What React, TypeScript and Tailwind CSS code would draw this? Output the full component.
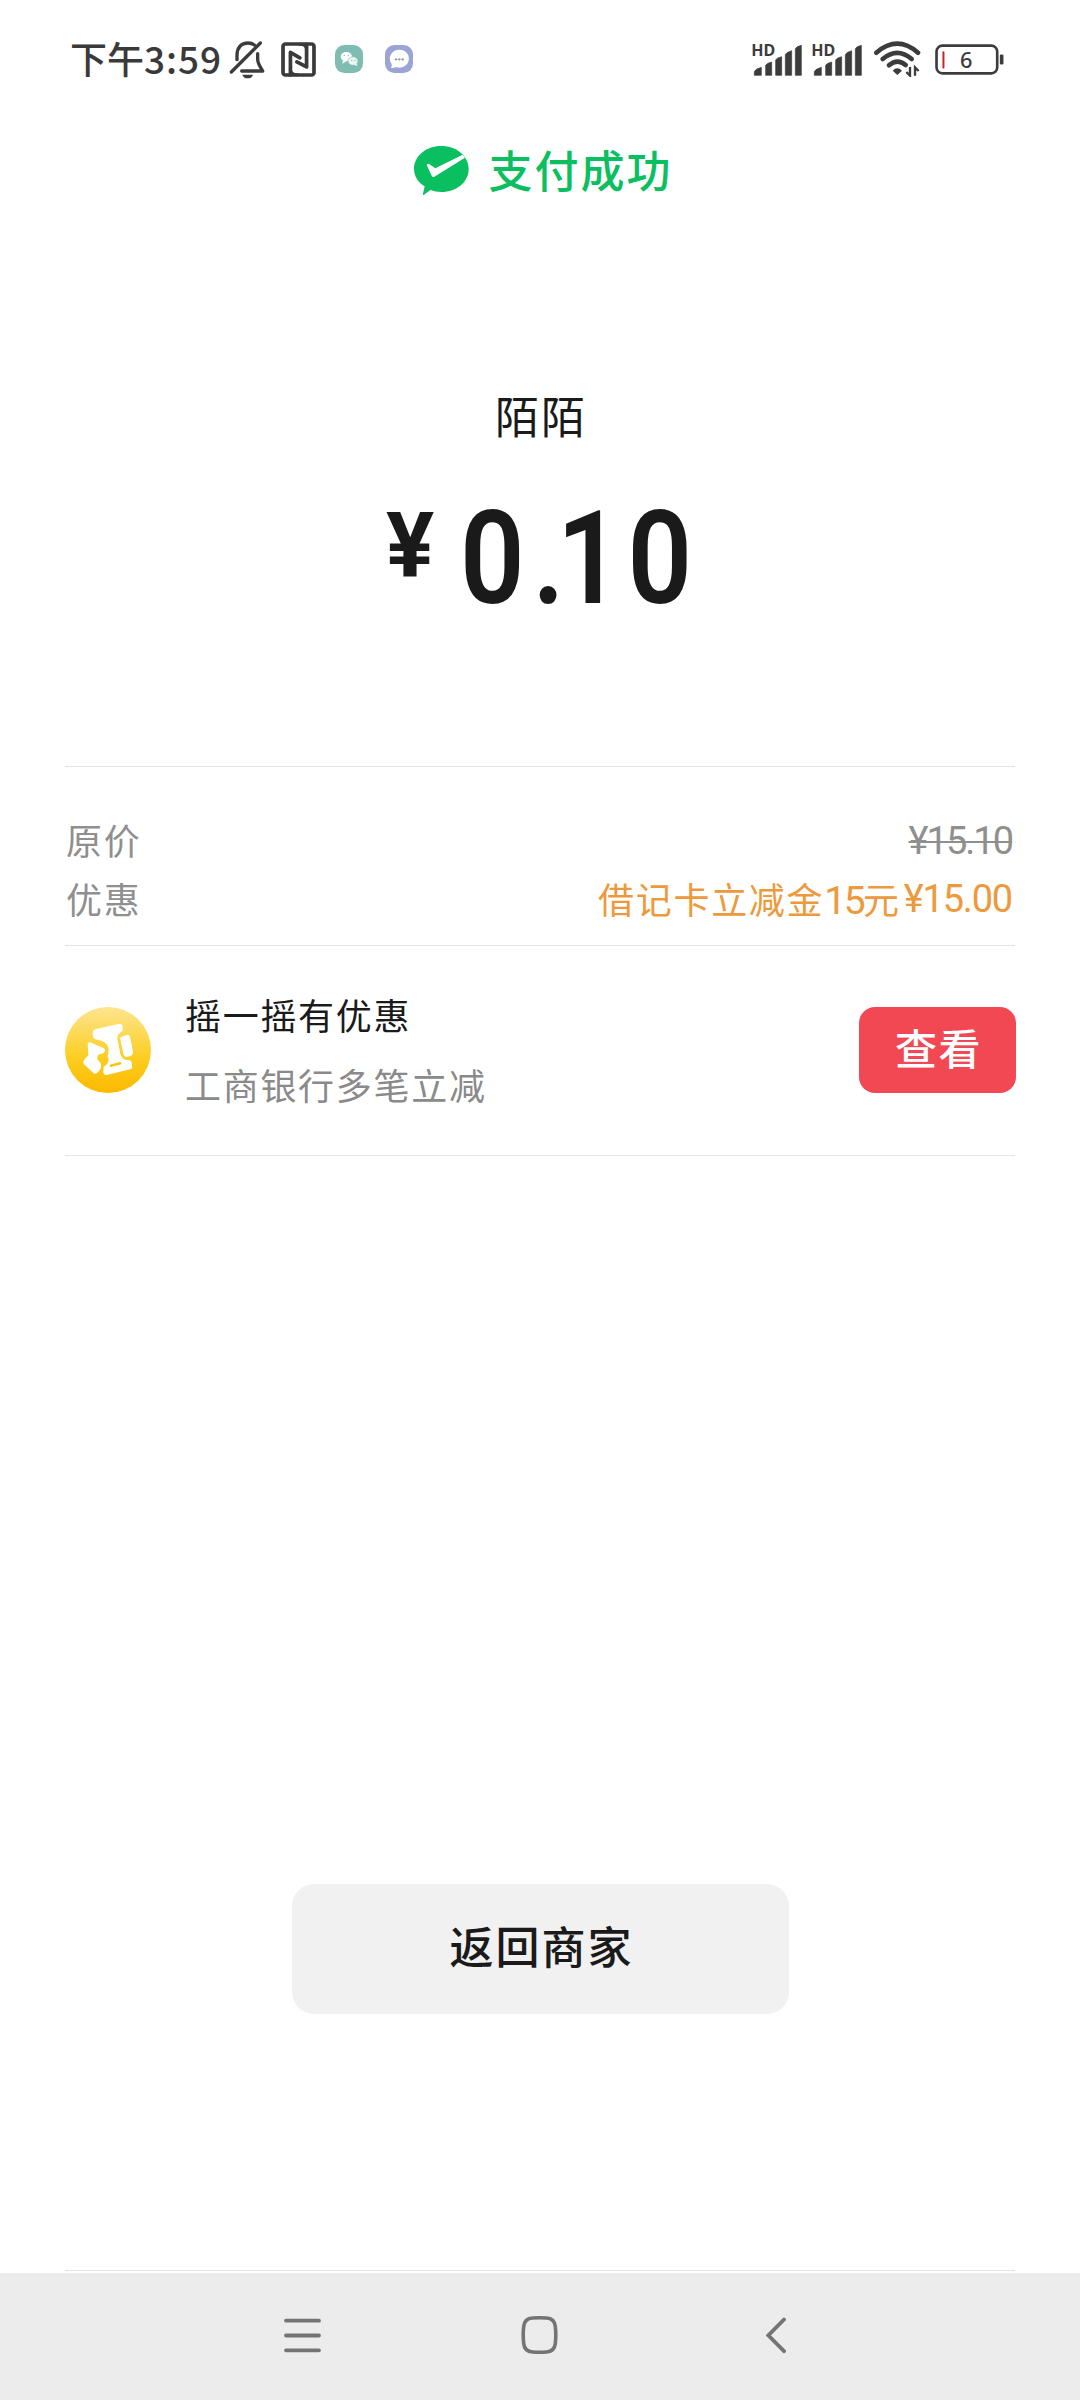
import { clsx } from 'clsx';
import type { ReactNode } from 'react';

const CJK = "font-[Roboto,'Noto_Sans_CJK_SC',sans-serif]";

const SIGNAL_BARS = [
  'M70 163 V152 Q72 145 91 139 V163 Z',
  'M104 163 V133 Q106 127 122 123 V163 Z',
  'M134 163 V117 Q136 111 152 107 V163 Z',
  'M163 163 V101 Q165 94 182 89 V163 Z',
  'M193 163 V84 Q195 77 211 73 V163 Z',
];

const MutedBellIcon = () => (
  <svg viewBox="537 60 108 117" className="h-[39px] w-9" fill="none">
    <g stroke="#3c3c3c" strokeWidth="10" strokeLinecap="round">
      <path d="M561 119 V106 C561 82 574 69 594 69 C602 69 608 71 613 75" />
      <path d="M544 156 L631 69" />
      <path d="M623 101 V118 C623 132 632 142 638 153 H575" strokeLinejoin="round" />
    </g>
    <path d="M577 164 H609 Q606 175 593 175 Q580 175 577 164 Z" fill="#3c3c3c" />
  </svg>
);

const NfcIcon = () => (
  <svg viewBox="692 65 104 104" className="size-[35px]" fill="none">
    <rect x="698" y="71" width="92" height="92" rx="7" stroke="#3a3a3a" strokeWidth="11" />
    <g stroke="#3a3a3a" strokeWidth="11" strokeLinejoin="round" strokeLinecap="round">
      <path d="M720 162 V96 L748 112" />
      <path d="M768 72 V139 L739 124" />
      <path d="M748 72 Q768 72 768 88 M741 162 Q720 162 720 146" strokeWidth="9" />
    </g>
  </svg>
);

const WeChatBadge = () => (
  <svg viewBox="855 75 84 84" className="size-7">
    <rect x="855" y="75" width="84" height="84" rx="28" fill="#7fbcb1" />
    <ellipse cx="889" cy="110" rx="17" ry="14" fill="#fff" />
    <path d="M879 120 L877 131 L889 124 Z" fill="#fff" />
    <ellipse cx="909" cy="123" rx="15" ry="13" fill="#eaf6f3" stroke="#7fbcb1" strokeWidth="2" />
    <path d="M912 134 L922 139 L920 130 Z" fill="#eaf6f3" />
    <g fill="#7fbcb1">
      <circle cx="883" cy="106" r="2" />
      <circle cx="895" cy="106" r="2" />
      <circle cx="905" cy="121" r="2" />
      <circle cx="915" cy="121" r="2" />
    </g>
  </svg>
);

const MessageBadge = () => (
  <svg viewBox="1005 75 84 84" className="size-7">
    <rect x="1005" y="75" width="84" height="84" rx="28" fill="#9ba5d5" />
    <path
      d="M1048 89 A28 27 0 1 1 1038 141 Q1031 145 1023 144 Q1027 138 1025 132 A28 27 0 0 1 1048 89 Z"
      fill="#fff"
    />
    <g fill="#8f9a8e">
      <circle cx="1038" cy="118" r="3.5" />
      <circle cx="1048" cy="118" r="3.5" />
      <circle cx="1058" cy="118" r="3.5" />
    </g>
  </svg>
);

const SignalIcon = ({ className }: { className?: string }) => (
  <svg
    viewBox="63 42 150 123"
    className={clsx('-mt-2 h-[41px] w-[50px] overflow-visible', className)}
    fill="#3c3c3c"
  >
    <text
      x="61"
      y="105"
      fontSize="47"
      fontWeight="700"
      fontFamily="'Noto Sans', sans-serif"
      textLength="72"
      lengthAdjust="spacingAndGlyphs"
    >
      HD
    </text>
    {SIGNAL_BARS.map((d) => (
      <path key={d} d={d} strokeWidth="2" stroke="#3c3c3c" strokeLinejoin="round" />
    ))}
  </svg>
);

const WifiIcon = () => (
  <svg viewBox="431 66 141 108" className="h-9 w-[47px]" fill="none">
    <g stroke="#3c3c3c" strokeWidth="14" strokeLinecap="round">
      <path d="M438 101 Q501 47 563 101" />
      <path d="M457 120 Q501 83 544 120" />
      <path d="M476 139 Q501 117 526 138" />
    </g>
    <path d="M487 155 Q500 141 515 155 L501 168 Z" fill="#3c3c3c" />
    <path
      d="M539 144 V170 L528 159 M554 170 V145 L565 156"
      stroke="#3c3c3c"
      strokeWidth="7"
    />
  </svg>
);

const BatteryIcon = () => (
  <svg viewBox="614 70 208 94" className="h-[31px] w-[69px]" fill="none">
    <rect x="618" y="75" width="184" height="84" rx="18" stroke="#3c3c3c" strokeWidth="8" />
    <rect x="636" y="92" width="6" height="52" rx="3" fill="#cf2027" />
    <rect x="810" y="102" width="11" height="30" rx="4" fill="#3c3c3c" />
    <text
      x="708"
      y="142"
      fontSize="66"
      fontWeight="500"
      textAnchor="middle"
      fontFamily="'Noto Sans', sans-serif"
      fill="#3c3c3c"
    >
      6
    </text>
  </svg>
);

const StatusBar = () => (
  <div className="flex h-[118px] items-center justify-between pr-[76px] pl-[70px]">
    <div className="flex items-center">
      <span className="flex w-[159px] items-baseline pt-0.5 font-medium whitespace-nowrap text-[#3a3a3a]">
        <span className="w-[74px] text-[37px] leading-[50px]">下午</span>
        <span className="font-['Noto_Sans_CJK_SC',sans-serif] text-[37px] leading-[50px] tracking-[0.9px]">
          3:59
        </span>
      </span>
      <MutedBellIcon />
      <span className="ml-4 flex items-center">
        <NfcIcon />
        <span className="ml-[19px] flex gap-[22px]">
          <WeChatBadge />
          <MessageBadge />
        </span>
      </span>
    </div>
    <div className="flex items-center">
      <SignalIcon />
      <SignalIcon className="ml-2.5" />
      <span className="ml-3">
        <WifiIcon />
      </span>
      <span className="ml-[14px]">
        <BatteryIcon />
      </span>
    </div>
  </div>
);

const PaidBubbleIcon = () => (
  <svg viewBox="69 78 165 147" className="h-[49px] w-[55px]">
    <path
      d="M151 78 C197 78 233 108 233 147 C233 186 197 216 151 216 C139 216 128 214 118 210 L98 225 Q95 226 96 221 L101 199 C81 187 69 168 69 147 C69 108 105 78 151 78 Z"
      fill="#0abf5f"
    />
    <path
      d="M107 135 Q109 129 114 132 L133 145 L215 104 L222 113 L130 170 Q125 173 122 167 Z"
      fill="#fff"
    />
  </svg>
);

const CoinIcon = () => (
  <svg viewBox="75 141 258 258" className="size-[86px] shrink-0">
    <defs>
      <linearGradient id="coin" x1="0" y1="0" x2="0" y2="1">
        <stop offset="0" stopColor="#fde58f" />
        <stop offset="0.6" stopColor="#fccd20" />
        <stop offset="1" stopColor="#fdb900" />
      </linearGradient>
    </defs>
    <circle cx="204" cy="270" r="129" fill="url(#coin)" />
    <g fill="#fff">
      <path d="M159 214 Q161 209 168 207 L239 191 Q248 191 248 203 V212 Q231 221 232 236 L241 281 Q246 299 261 300 L271 301 Q277 305 276 316 L277 322 Q276 326 271 328 L199 345 Q190 345 190 336 L191 320 Q205 312 206 300 L203 287 Q209 270 202 255 Q194 244 180 241 L165 238 Q157 233 158 224 Z" />
      <path d="M244 230 L263 224 Q268 224 270 230 L279 274 Q280 284 273 287 L262 291 Q253 291 250 281 L241 239 Q240 232 244 230 Z" />
      <path d="M143 251 Q147 245 154 248 L190 264 Q198 269 194 275 Q190 281 177 283 Q170 288 173 299 L182 309 Q186 323 179 330 L171 339 Q165 343 160 339 L132 313 Q127 307 132 300 L145 286 Z" />
    </g>
    <path d="M213 317 L240 310" stroke="#fcc60d" strokeWidth="8" strokeLinecap="round" />
  </svg>
);

const Divider = () => <div className="h-px w-full bg-[#e4e4e4]" />;

const DetailRow = ({ label, children }: { label: string; children: ReactNode }) => (
  <div className="flex h-[59px] items-center justify-between">
    <span className="pl-px text-[36px] tracking-[1.7px] text-[#8f8f8f]">{label}</span>
    {children}
  </div>
);

const AmountSection = () => (
  <section className="flex flex-col items-center">
    <h2 className="pl-0.5 text-[44px] leading-[60px] tracking-[2px]">陌陌</h2>
    <div className="mt-[53px] flex h-[114px] w-[308px] items-start font-[Roboto,sans-serif] text-[#1a1a1a]">
      <span className="mt-[-7px] w-[74px] shrink-0 text-[90px] leading-[103px] font-bold">¥</span>
      <span className="flex origin-left scale-x-[0.87] text-[130px] leading-[114px] font-semibold">
        0<span className="ml-[9px] tracking-[-9px]">.</span>
        <span className="mr-[7px]">1</span>0
      </span>
    </div>
  </section>
);

const NavBar = () => (
  <nav className="flex h-[127px] items-start bg-[#ececec] pt-[42px] pl-[284px] text-[#747474]">
    <svg viewBox="0 0 37 40" className="h-10 w-[37px]" stroke="currentColor" strokeWidth="3.8" strokeLinecap="round">
      <path d="M2 5.7 H35 M2 20.5 H35 M2 35.3 H35" />
    </svg>
    <svg viewBox="0 0 37 40" className="ml-[200px] h-10 w-[37px]" fill="none" stroke="currentColor" strokeWidth="3.6">
      <path d="M11.5 3 Q18.5 2.5 25.5 3 Q33.5 3.5 34.3 11.5 Q35.3 20 34.3 28.5 Q33.5 36.5 25.5 37 Q18.5 37.5 11.5 37 Q3.5 36.5 2.7 28.5 Q1.7 20 2.7 11.5 Q3.5 3.5 11.5 3 Z" />
    </svg>
    <svg
      viewBox="0 0 20 40"
      className="ml-[208px] h-10 w-5"
      fill="none"
      stroke="currentColor"
      strokeWidth="3.8"
      strokeLinecap="round"
    >
      <path d="M18 4.5 L2.3 20.4 L18 36.2" />
    </svg>
  </nav>
);

const App = () => (
  <div className={clsx('flex h-[2400px] w-[1080px] flex-col bg-white text-[#1a1a1a]', CJK)}>
    <StatusBar />
    <main className="flex grow flex-col px-[65px]">
      <header className="mt-[22px] flex h-[60px] items-center justify-center pl-[6px]">
        <PaidBubbleIcon />
        <h1 className="ml-5 pt-[5px] text-[44px] leading-[60px] font-medium tracking-[2px] text-[#0abf5f]">
          支付成功
        </h1>
      </header>
      <div className="mt-[189px] h-[377px]">
        <AmountSection />
      </div>
      <Divider />
      <div className="flex h-[178px] flex-col pt-[46px]">
        <DetailRow label="原价">
          <span className="mr-[3px] pb-0.5 text-[38px] tracking-[-2px] text-[#8f8f8f] line-through decoration-2">
            ¥15.10
          </span>
        </DetailRow>
        <DetailRow label="优惠">
          <span className="mr-[3px] flex items-baseline text-[#ec9a3c]">
            <span className="text-[36px] tracking-[1.7px]">
              借记卡立减金<span className="text-[39px] tracking-[-2.5px]">15</span>元
            </span>
            <span className="relative -top-0.5 ml-[3px] text-[38px] tracking-[-1.2px]">¥15.00</span>
          </span>
        </DetailRow>
      </div>
      <Divider />
      <section className="flex h-[209px] items-center pb-0.5">
        <CoinIcon />
        <div className="ml-[34px] flex grow flex-col gap-4 pt-1.5 text-[36px] leading-[54px] tracking-[1.7px]">
          <p>摇一摇有优惠</p>
          <p className="text-[#8a8a8a]">工商银行多笔立减</p>
        </div>
        <button className="-mr-px h-[86px] w-[157px] rounded-2xl bg-[#f24854] pt-0.5 pl-0.5 text-[42px] leading-none font-medium tracking-[1.5px] text-white">
          查看
        </button>
      </section>
      <Divider />
      <button className="mt-[728px] h-[130px] w-[497px] self-center rounded-[22px] bg-[#f1f1f1] pl-[3px] text-[44px] font-medium tracking-[2px]">
        返回商家
      </button>
      <div className="mt-auto pb-0.5">
        <Divider />
      </div>
    </main>
    <NavBar />
  </div>
);

export default App;
